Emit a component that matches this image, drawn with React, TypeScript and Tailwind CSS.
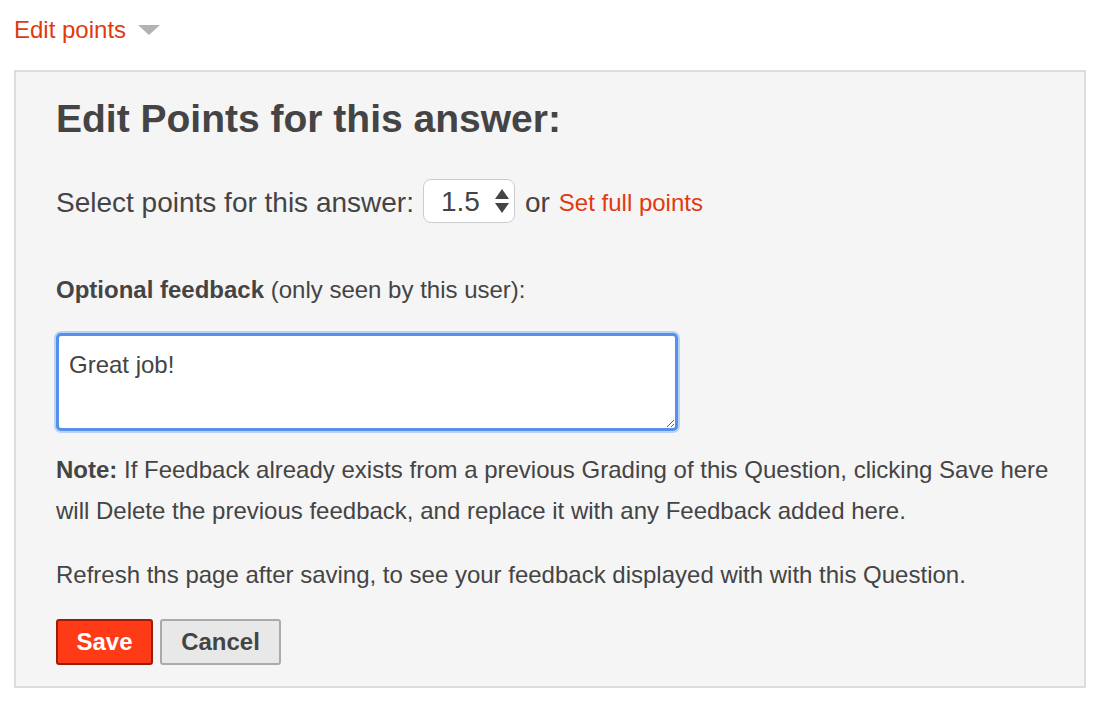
import React from "react";

export default function App() {
  return (
    <div
      className="w-[1106px] h-[702px] bg-white text-[#444444] overflow-hidden"
      style={{ fontFamily: '"Liberation Sans", Arial, Helvetica, sans-serif' }}
    >
      <div className="pl-[14px] pt-[14px] h-[70px] flex items-start">
        <a className="text-[24px] leading-[32px] text-[#e03a0e] cursor-pointer">Edit points</a>
        <svg className="ml-[12px] mt-[11px]" width="22" height="10" viewBox="0 0 22 10">
          <polygon points="0,0 22,0 11,10" fill="#b3b3b3" />
        </svg>
      </div>
      <div className="ml-[14px] w-[1072px] h-[618px] border-2 border-[#dddddd] bg-[#f5f5f5] pl-[40px] pt-[23px]">
        <h1 className="text-[39px] leading-[48px] font-bold text-[#444444]">Edit Points for this answer:</h1>
        <div className="mt-[36px] flex items-center h-[44px]">
          <span className="text-[28px] leading-[44px] pt-[3px]">Select points for this answer:</span>
          <div className="ml-[9px] w-[92px] h-[44px] rounded-[8px] border border-[#cccccc] bg-white flex items-center pl-[17px]">
            <span className="text-[28px] leading-[44px] pt-[2px]">1.5</span>
            <svg className="ml-[14px]" width="16" height="26" viewBox="0 0 16 26">
              <polygon points="8,1 15,11 1,11" fill="#444444" />
              <polygon points="1,15 15,15 8,25" fill="#444444" />
            </svg>
          </div>
          <span className="ml-[10px] text-[28px] leading-[44px] pt-[3px]">or</span>
          <a className="ml-[9px] text-[24px] leading-[44px] pt-[3px] text-[#e03a0e] cursor-pointer">Set full points</a>
        </div>
        <div className="mt-[49px] text-[24px] leading-[36px]">
          <b>Optional feedback</b> (only seen by this user):
        </div>
        <textarea
          className="mt-[25px] block w-[622px] h-[98px] rounded-[5px] border-[3px] border-[#5590ea] bg-white px-[10px] pt-[13px] pb-[5px] text-[24px] leading-[32px] text-[#444444] outline-none shadow-[0_0_0_2px_#b9d3f7]"
          defaultValue="Great job!"
          style={{ fontFamily: '"Liberation Sans", Arial, Helvetica, sans-serif' }}
        />
        <p className="mt-[18px] text-[24px] leading-[41px] w-[1000px]">
          <b>Note:</b> If Feedback already exists from a previous Grading of this Question, clicking Save here will Delete the previous feedback, and replace it with any Feedback added here.
        </p>
        <p className="mt-[23px] text-[24px] leading-[41px]">
          Refresh ths page after saving, to see your feedback displayed with with this Question.
        </p>
        <div className="mt-[24px] flex gap-[7px]">
          <button className="w-[97px] h-[46px] rounded-[3px] border-2 border-[#9a1d06] bg-[#ff3a17] text-white text-[24px] font-bold">
            Save
          </button>
          <button className="w-[121px] h-[46px] rounded-[3px] border-2 border-[#aaaaaa] bg-[#e8e8e8] text-[#444444] text-[24px] font-bold">
            Cancel
          </button>
        </div>
      </div>
    </div>
  );
}
